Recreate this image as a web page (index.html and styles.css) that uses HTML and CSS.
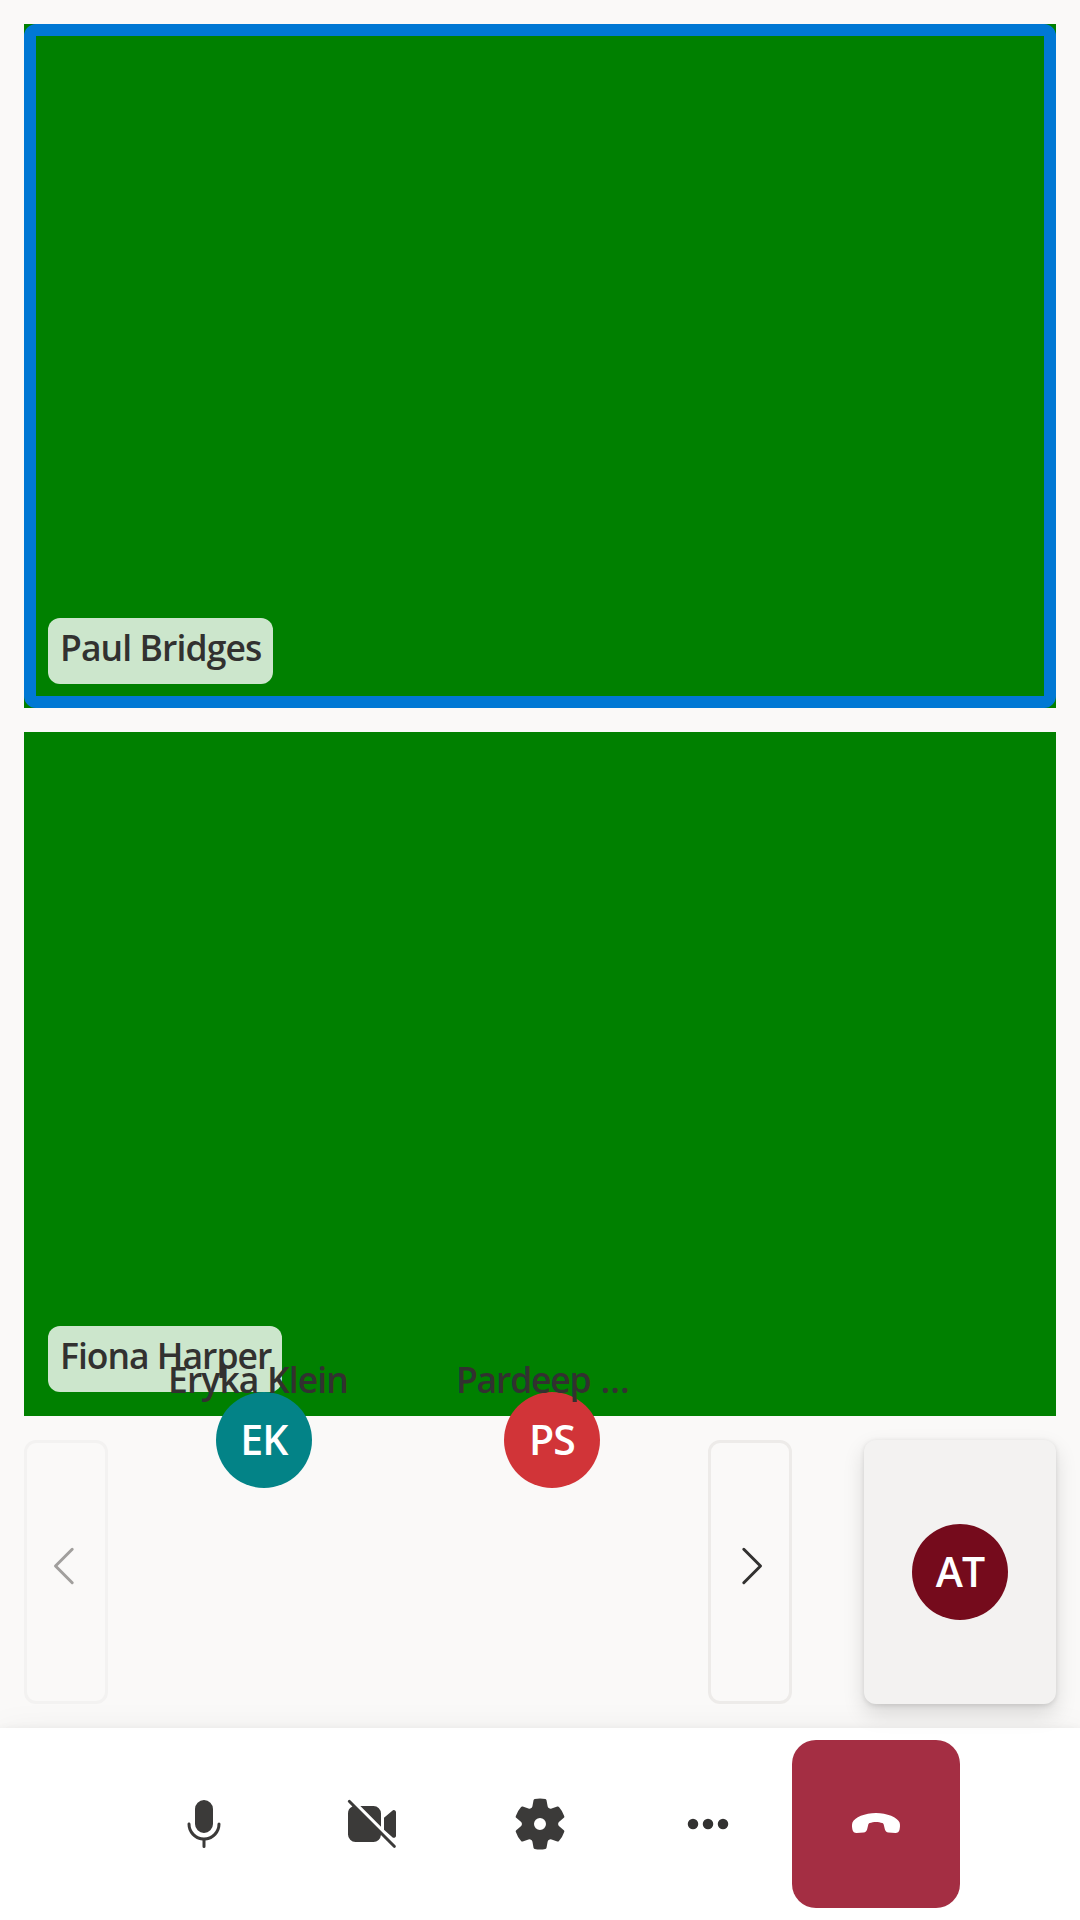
FILE: index.html
```html
<!DOCTYPE html>
<html lang="en">
<head>
<meta charset="utf-8">
<title>Call</title>
<link rel="stylesheet" href="styles.css">
</head>
<body>
<div class="call">
  <main class="stage">
    <section class="video speaking"><span class="label label-paul">Paul Bridges</span></section>
    <section class="video"><span class="label label-fiona">Fiona Harper</span></section>
    <div class="strip">
      <button class="nav nav-disabled" aria-label="Previous" disabled>
        <svg viewBox="0 0 60 60"><path d="M36.2 7.3 19.5 24l16.7 16.7"/></svg>
      </button>
      <div class="gallery">
        <div class="person"><div class="avatar teal">EK</div><span class="name name-eryka">Eryka Klein</span></div>
        <div class="person"><div class="avatar red">PS</div><span class="name name-pardeep">Pardeep <span class="dots">...</span></span></div>
      </div>
      <button class="nav" aria-label="Next">
        <svg viewBox="0 0 60 60"><path d="M23.8 7.3 40.5 24 23.8 40.7"/></svg>
      </button>
      <div class="self"><div class="avatar maroon">AT</div></div>
    </div>
  </main>
  <footer class="controls">
    <button class="control" aria-label="Microphone">
      <svg viewBox="0 0 20 20"><path d="M10 13a3 3 0 0 0 3-3V5a3 3 0 0 0-6 0v5a3 3 0 0 0 3 3zM5 9.5c.28 0 .5.22.5.5a4.5 4.5 0 0 0 9 0 .5.5 0 0 1 1 0 5.5 5.5 0 0 1-5 5.48v2.02a.5.5 0 0 1-1 0v-2.02A5.5 5.5 0 0 1 4.5 10c0-.28.22-.5.5-.5z"/></svg>
    </button>
    <button class="control" aria-label="Camera off">
      <svg viewBox="0 0 20 20"><path d="M2.85 2.15a.5.5 0 1 0-.7.7l1.32 1.33A2.5 2.5 0 0 0 2 6.5v7A2.5 2.5 0 0 0 4.5 16h6a2.5 2.5 0 0 0 2.48-2.31l4.17 4.16a.5.5 0 0 0 .7-.7l-15-15zM13 10.88 6.12 4h4.38A2.5 2.5 0 0 1 13 6.5v4.38zM14 11.88V7.93l2.77-2.38a.75.75 0 0 1 1.23.57v7.76c0 .63-.75.96-1.22.56l-.08-.07L14 11.88z"/></svg>
    </button>
    <button class="control" aria-label="Settings">
      <svg viewBox="0 0 20 20"><path fill-rule="evenodd" d="M1.91 7.38A8.5 8.5 0 0 1 3.7 4.3a.5.5 0 0 1 .54-.13l1.92.68a1 1 0 0 0 1.32-.76l.36-2a.5.5 0 0 1 .4-.4 8.53 8.53 0 0 1 3.55 0c.2.04.35.2.38.4l.37 2a1 1 0 0 0 1.32.76l1.92-.68a.5.5 0 0 1 .54.13 8.5 8.5 0 0 1 1.78 3.08c.06.2 0 .4-.15.54l-1.56 1.32a1 1 0 0 0 0 1.52l1.56 1.32a.5.5 0 0 1 .15.54 8.5 8.5 0 0 1-1.78 3.08.5.5 0 0 1-.54.13l-1.92-.68a1 1 0 0 0-1.32.76l-.37 2a.5.5 0 0 1-.38.4 8.53 8.53 0 0 1-3.56 0 .5.5 0 0 1-.39-.4l-.36-2a1 1 0 0 0-1.32-.76l-1.92.68a.5.5 0 0 1-.54-.13 8.5 8.5 0 0 1-1.78-3.08.5.5 0 0 1 .15-.54l1.56-1.32a1 1 0 0 0 0-1.52L2.06 7.92a.5.5 0 0 1-.15-.54zM8 10a2 2 0 1 0 4 0 2 2 0 0 0-4 0z"/></svg>
    </button>
    <button class="control more" aria-label="More">
      <svg viewBox="0 0 20 20"><circle cx="5" cy="10" r="1.75"/><circle cx="10" cy="10" r="1.75"/><circle cx="15" cy="10" r="1.75"/></svg>
    </button>
    <button class="control end" aria-label="Leave call">
      <svg viewBox="0 0 20 20"><path d="M10 6.33c3.6 0 7.25 1.45 7.85 3.2.25.75.17 1.65-.03 2.5-.18.7-.65 1.02-1.37 1l-2.3-.16c-.68-.06-1.02-.48-1.2-1.12l-.35-1.42c-.07-.3-.2-.5-.5-.63-.6-.25-1.4-.4-2.1-.4s-1.5.15-2.1.4c-.3.13-.43.33-.5.63l-.35 1.42c-.18.64-.52 1.06-1.2 1.12l-2.3.16c-.72.02-1.19-.3-1.37-1-.2-.85-.28-1.75-.03-2.5.6-1.75 4.25-3.2 7.85-3.2z"/></svg>
    </button>
  </footer>
</div>
</body>
</html>
```

FILE: styles.css
```css
* { box-sizing: border-box; }

body {
  margin: 0;
  background: #faf9f8;
  color: #323130;
  font-family: "Open Sans", "Noto Sans", sans-serif;
  font-size: 35.5px;
  font-weight: 600;
}

button { padding: 0; border: 0; background: none; font: inherit; color: inherit; }

.call { display: flex; flex-direction: column; width: 1080px; height: 1920px; overflow: hidden; }

.stage { flex: 1; display: flex; flex-direction: column; gap: 24px; padding: 24px; min-height: 0; }

.video {
  position: relative;
  flex: 1;
  display: flex;
  align-items: flex-end;
  padding: 24px;
  background: #008000;
}

.speaking::after {
  content: "";
  position: absolute;
  inset: 0;
  border: 12px solid #0078d4;
  border-radius: 12px;
}

.label {
  height: 66px;
  padding: 0 12px;
  border-radius: 12px;
  background: rgba(255, 255, 255, 0.8);
  line-height: 58px;
  white-space: nowrap;
}

.label-paul { width: 225px; letter-spacing: -0.9px; }
.label-fiona { width: 234px; letter-spacing: -1px; }

.strip { display: flex; height: 264px; }

.nav {
  display: flex;
  align-items: center;
  justify-content: center;
  width: 84px;
  border: 3px solid #edebe9;
  border-radius: 12px;
}

.nav svg { flex: none; width: 60px; height: 60px; fill: none; stroke: #323130; stroke-width: 3; stroke-linecap: round; stroke-linejoin: round; }
.nav-disabled { border-color: #f3f2f1; }
.nav-disabled svg { stroke: #a19f9d; }

.gallery { display: flex; gap: 24px; width: 552px; margin: 0 24px; }

.person { position: relative; display: flex; align-items: center; justify-content: center; width: 264px; height: 0; }

.name {
  position: absolute;
  left: 36px;
  bottom: 37px;
  line-height: 48px;
  white-space: nowrap;
}

.name-eryka { letter-spacing: -0.9px; }
.name-pardeep { letter-spacing: -1.2px; }
.dots { margin-left: 2px; letter-spacing: 0; }

.avatar {
  flex: none;
  display: flex;
  align-items: center;
  justify-content: center;
  width: 96px;
  height: 96px;
  padding-bottom: 2px;
  border-radius: 50%;
  color: #fff;
  font-size: 41px;
  line-height: 60px;
  letter-spacing: -0.8px;
}

.teal { background: #038387; }
.red { background: #d13438; }
.maroon { background: #750b1c; }

.self {
  position: relative;
  z-index: 1;
  display: flex;
  align-items: center;
  justify-content: center;
  width: 192px;
  height: 264px;
  margin-left: auto;
  border-radius: 12px;
  background: #f3f2f1;
  box-shadow: 0 9.6px 21.6px rgba(0, 0, 0, 0.132), 0 1.8px 5.4px rgba(0, 0, 0, 0.108);
}

.controls {
  display: flex;
  justify-content: center;
  height: 192px;
  padding: 12px 0;
  background: #fff;
  box-shadow: 0 19.2px 43.2px rgba(0, 0, 0, 0.132), 0 3.6px 10.8px rgba(0, 0, 0, 0.108);
}

.control { display: flex; align-items: center; justify-content: center; width: 168px; height: 168px; color: #3b3a39; }
.control svg { width: 60px; height: 60px; fill: currentColor; }
.more { color: #323130; }
.end { border-radius: 24px; background: #a42e43; color: #fff; }
```
